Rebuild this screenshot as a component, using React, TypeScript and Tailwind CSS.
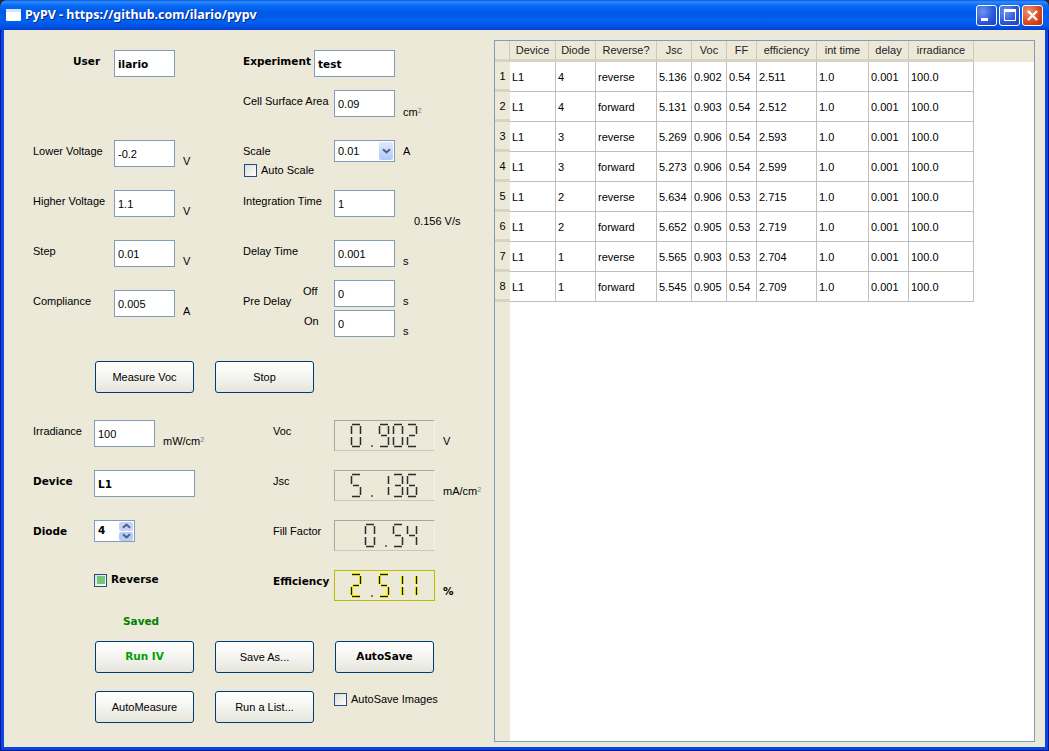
import type { ReactNode } from "react";

const SEGMENTS: Record<string, string> = {
  "0": "abcdef",
  "1": "bc",
  "2": "abged",
  "3": "abgcd",
  "4": "fgbc",
  "5": "afgcd",
  "6": "afgedc",
  "9": "abcdfg",
};

// x, y, length of each segment's dark core; horizontal ones are a, d, g
const SEGMENT_RECTS: Record<string, [number, number, number]> = {
  a: [2, 1, 8],
  b: [10, 3, 8],
  c: [10, 14, 8],
  d: [2, 23, 8],
  e: [1, 14, 8],
  f: [1, 3, 8],
  g: [3, 12, 6],
};

const rows = [
  ["1", "L1", "4", "reverse", "5.136", "0.902", "0.54", "2.511"],
  ["2", "L1", "4", "forward", "5.131", "0.903", "0.54", "2.512"],
  ["3", "L1", "3", "reverse", "5.269", "0.906", "0.54", "2.593"],
  ["4", "L1", "3", "forward", "5.273", "0.906", "0.54", "2.599"],
  ["5", "L1", "2", "reverse", "5.634", "0.906", "0.53", "2.715"],
  ["6", "L1", "2", "forward", "5.652", "0.905", "0.53", "2.719"],
  ["7", "L1", "1", "reverse", "5.565", "0.903", "0.53", "2.704"],
  ["8", "L1", "1", "forward", "5.545", "0.905", "0.54", "2.709"],
];

const headers = ["Device", "Diode", "Reverse?", "Jsc", "Voc", "FF", "efficiency", "int time", "delay", "irradiance"];
const gridCols = "grid grid-cols-[15px_46px_40px_61px_35px_35px_30px_60px_52px_40px_65px]";
const boldFont = "font-['DejaVu_Sans',sans-serif] text-[10.5px] font-bold";

const Field = ({ value, width = "w-[61px]", bold }: { value: string; width?: string; bold?: boolean }) => (
  <input
    readOnly
    value={value}
    className={`${width} h-[27px] shrink-0 border border-[#7f9db9] bg-white px-[3px] text-black outline-none ${bold ? boldFont : ""}`}
  />
);

const Label = ({ children, width, bold }: { children: ReactNode; width: string; bold?: boolean }) => (
  <span className={`${width} h-[22px] shrink-0 leading-[22px] whitespace-nowrap ${bold ? boldFont : ""}`}>{children}</span>
);

const Unit = ({ children, bold }: { children: ReactNode; bold?: boolean }) => (
  <span className={`mt-[11px] ml-2 h-5 leading-5 whitespace-nowrap ${bold ? boldFont : ""}`}>{children}</span>
);

const Sq = () => <sup className="text-[7px] leading-none text-[#777]">2</sup>;

const Check = ({ checked }: { checked?: boolean }) => (
  <span className="flex h-[13px] w-[13px] shrink-0 items-center justify-center border border-[#1c5180] bg-linear-to-br from-[#dcdcd7] to-white">
    {checked && <span className="h-2 w-2 bg-[#73c77b]" />}
  </span>
);

const Btn = ({ children, className = "" }: { children: ReactNode; className?: string }) => (
  <button className={`flex h-8 w-[99px] shrink-0 items-center justify-center rounded-[3px] border border-[#003c74] bg-linear-to-b from-white via-[#f4f4f0] to-[#e6e5dc] ${className}`}>
    {children}
  </button>
);

const Lcd = ({ value, active }: { value: string; active?: boolean }) => {
  const chars = value.split("");
  const start = 5 - chars.length;
  const fg = active ? "#d8d800" : "#b9b8ae";
  const dark = active ? "#1a1a00" : "#2c2c2c";
  return (
    <div className={`h-[31px] w-[101px] shrink-0 border ${active ? "border-[#bcbc00]" : "border-[#aaa89c] border-r-[#f4f3ea] border-b-[#c9c7ba]"}`}>
      <svg width="99" height="29" viewBox="0 0 99 29" aria-label={value} shapeRendering="crispEdges">
        {chars.map((c, i) => {
          const x = 15 + (start + i) * 14;
          if (c === ".") return <rect key={i} x={x + 7} y={24} width={2} height={2} fill={active ? "#8a8a00" : "#77766c"} />;
          return (
            <g key={i} transform={`translate(${x} 2)`}>
              {SEGMENTS[c].split("").map((s) => {
                const [sx, sy, len] = SEGMENT_RECTS[s];
                const horizontal = s === "a" || s === "d" || s === "g";
                return horizontal ? (
                  <g key={s}>
                    <rect x={sx} y={sy - 1} width={len} height={3} fill={fg} />
                    <rect x={sx} y={sy} width={len} height={1} fill={dark} />
                  </g>
                ) : (
                  <g key={s}>
                    <rect x={sx - 1} y={sy} width={3} height={len} fill={fg} />
                    <rect x={sx} y={sy} width={1} height={len} fill={dark} />
                  </g>
                );
              })}
            </g>
          );
        })}
      </svg>
    </div>
  );
};

const Arrow = ({ up }: { up?: boolean }) => (
  <svg width="9" height="6" viewBox="0 0 9 6" className={up ? "rotate-180" : ""}>
    <path d="M1 1.2 4.5 4.5 8 1.2" fill="none" stroke="#4d6185" strokeWidth="2" />
  </svg>
);

const WinBtn = ({ close, children }: { close?: boolean; children: ReactNode }) => (
  <span
    className={`flex h-[21px] w-[21px] items-center justify-center rounded-[3px] border border-white ${
      close
        ? "bg-[radial-gradient(circle_at_30%_30%,#ef9272,#d9461f_60%,#b5300f)]"
        : "bg-[radial-gradient(circle_at_30%_30%,#6f94f0,#2a56d8_60%,#1c3fc0)]"
    }`}
  >
    {children}
  </span>
);

export default function App() {
  return (
    <div className="flex h-[751px] w-[1049px] flex-col overflow-hidden bg-[#2a2a2a] font-['Liberation_Sans',sans-serif] text-[11px] text-black">
      <div className="flex h-[30px] shrink-0 items-center rounded-t-[7px] bg-[linear-gradient(to_bottom,#0a5ae0_0,#2f8cff_2px,#0a6cf5_5px,#0058e8_12px,#0160f0_22px,#0250e0_27px,#0240cc_30px)] pr-[6px] pl-[6px]">
        <span className="flex h-3 w-[15px] flex-col rounded-[1px] bg-white">
          <span className="h-[3px] w-full bg-[#d8e6fb]" />
        </span>
        <span className="ml-1 font-['Noto_Sans',sans-serif] text-[12.5px] font-bold whitespace-nowrap text-white [text-shadow:1px_1px_0_#0a2a90]">
          PyPV - https://github.com/ilario/pypv
        </span>
        <span className="ml-auto flex gap-[2px]">
          <WinBtn>
            <span className="mt-[9px] mr-[5px] h-[3px] w-[7px] bg-white" />
          </WinBtn>
          <WinBtn>
            <span className="h-[12px] w-[12px] border border-t-[3px] border-white" />
          </WinBtn>
          <WinBtn close>
            <svg width="13" height="13" viewBox="0 0 13 13">
              <path d="M2 2 11 11M11 2 2 11" stroke="white" strokeWidth="2.4" />
            </svg>
          </WinBtn>
        </span>
      </div>

      <div className="flex min-h-0 flex-1 border-x border-b border-[#00188f]">
        <div className="flex min-h-0 flex-1 border-x-[3px] border-b-[3px] border-[#0a45e6] bg-[#ece9d8]">
          <div className="w-[490px] shrink-0">
            <div className="ml-[29px] flex pt-5">
              <div className="flex w-[210px] shrink-0 flex-col">
                <div className="flex h-[27px]">
                  <Label width="w-[81px] pl-10" bold>User</Label>
                  <Field value="ilario" bold />
                </div>
                <div className="mt-[63px] flex h-[27px]">
                  <Label width="w-[81px]">Lower Voltage</Label>
                  <Field value="-0.2" />
                  <Unit>V</Unit>
                </div>
                <div className="mt-[23px] flex h-[27px]">
                  <Label width="w-[81px]">Higher Voltage</Label>
                  <Field value="1.1" />
                  <Unit>V</Unit>
                </div>
                <div className="mt-[23px] flex h-[27px]">
                  <Label width="w-[81px]">Step</Label>
                  <Field value="0.01" />
                  <Unit>V</Unit>
                </div>
                <div className="mt-[23px] flex h-[27px]">
                  <Label width="w-[81px]">Compliance</Label>
                  <Field value="0.005" />
                  <Unit>A</Unit>
                </div>
              </div>

              <div className="flex flex-col">
                <div className="flex h-[27px]">
                  <Label width="w-[71px]" bold>Experiment</Label>
                  <Field value="test" width="w-[81px]" bold />
                </div>
                <div className="mt-[13px] flex h-[27px]">
                  <Label width="w-[91px]">Cell Surface Area</Label>
                  <Field value="0.09" />
                  <span className="mt-3 ml-2 h-5 leading-5">cm<Sq /></span>
                </div>
                <div className="mt-[23px] flex h-[22px]">
                  <Label width="w-[91px]">Scale</Label>
                  <div className="flex h-[22px] w-[61px] items-center justify-between border border-[#7f9db9] bg-white pr-px pl-[3px]">
                    0.01
                    <span className="flex h-[18px] w-[14px] items-center justify-center rounded-[2px] bg-linear-to-b from-[#e1eafe] to-[#aec8f7]">
                      <Arrow />
                    </span>
                  </div>
                  <span className="ml-2 h-[22px] leading-[22px]">A</span>
                </div>
                <div className="mt-px flex h-[14px] items-center gap-1 pl-px">
                  <Check />
                  Auto Scale
                </div>
                <div className="mt-[13px] flex h-[27px]">
                  <Label width="w-[91px]">Integration Time</Label>
                  <Field value="1" />
                  <span className="mt-[21px] ml-[19px] h-5 leading-5 whitespace-nowrap">0.156 V/s</span>
                </div>
                <div className="mt-[23px] flex h-[27px]">
                  <Label width="w-[91px]">Delay Time</Label>
                  <Field value="0.001" />
                  <Unit>s</Unit>
                </div>
                <div className="mt-[13px] flex">
                  <span className="mt-[10px] w-[60px] leading-[22px]">Pre Delay</span>
                  <div className="flex flex-col gap-[3px]">
                    <div className="flex h-[27px]">
                      <Label width="w-[31px]">Off</Label>
                      <Field value="0" />
                      <Unit>s</Unit>
                    </div>
                    <div className="flex h-[27px]">
                      <Label width="w-[31px] pl-px">On</Label>
                      <Field value="0" />
                      <Unit>s</Unit>
                    </div>
                  </div>
                </div>
              </div>
            </div>

            <div className="mt-6 ml-[91px] flex gap-[21px]">
              <Btn>Measure Voc</Btn>
              <Btn>Stop</Btn>
            </div>

            <div className="mt-[27px] ml-[29px] flex">
              <div className="flex w-[240px] shrink-0 flex-col">
                <div className="flex h-[50px]">
                  <Label width="w-[61px]">Irradiance</Label>
                  <Field value="100" />
                  <Unit>mW/cm<Sq /></Unit>
                </div>
                <div className="flex h-[50px]">
                  <Label width="w-[61px]" bold>Device</Label>
                  <Field value="L1" width="w-[101px]" bold />
                </div>
                <div className="flex h-[50px]">
                  <Label width="w-[61px]" bold>Diode</Label>
                  <div className={`flex h-[22px] w-[41px] items-center justify-between border border-[#7f9db9] bg-white pr-px pl-[3px] ${boldFont}`}>
                    4
                    <span className="flex w-[14px] flex-col gap-px">
                      <span className="flex h-[9px] items-center justify-center rounded-[2px] bg-[#c3d3f9]"><Arrow up /></span>
                      <span className="flex h-[9px] items-center justify-center rounded-[2px] bg-[#b9ccf8]"><Arrow /></span>
                    </span>
                  </div>
                </div>
                <div className="flex h-[42px] items-start pl-[61px]">
                  <span className={`mt-[3px] flex h-[14px] items-center gap-1 ${boldFont}`}>
                    <Check checked />
                    Reverse
                  </span>
                </div>
                <div className={`h-[18px] pl-[90px] leading-[18px] text-[#008000] ${boldFont}`}>Saved</div>
              </div>

              <div className="flex flex-col">
                <div className="flex h-[50px]">
                  <Label width="w-[61px]">Voc</Label>
                  <Lcd value="0.902" />
                  <Unit>V</Unit>
                </div>
                <div className="flex h-[50px]">
                  <Label width="w-[61px]">Jsc</Label>
                  <Lcd value="5.136" />
                  <Unit>mA/cm<Sq /></Unit>
                </div>
                <div className="flex h-[50px]">
                  <Label width="w-[61px]">Fill Factor</Label>
                  <Lcd value="0.54" />
                </div>
                <div className="flex h-[50px]">
                  <Label width="w-[61px]" bold>Efficiency</Label>
                  <Lcd value="2.511" active />
                  <Unit bold>%</Unit>
                </div>
              </div>
            </div>

            <div className="mt-[11px] ml-[91px] flex gap-[21px]">
              <Btn className={`text-[#00a000] ${boldFont}`}>Run IV</Btn>
              <Btn>Save As...</Btn>
              <Btn className={boldFont}>AutoSave</Btn>
            </div>
            <div className="mt-[18px] ml-[91px] flex gap-[21px]">
              <Btn>AutoMeasure</Btn>
              <Btn>Run a List...</Btn>
              <span className="mt-px -ml-px flex h-[14px] items-center gap-1 whitespace-nowrap">
                <Check />
                AutoSave Images
              </span>
            </div>
          </div>

          <div className="mt-[10px] mb-[5px] flex w-[541px] shrink-0 flex-col border border-[#7f9db9] bg-white">
            <div className={`${gridCols} h-[21px] shrink-0 bg-[#ece9d8]`}>
              <span className="border-r border-b-[3px] border-r-[#cdcabb] border-b-[#d8d4c4]" />
              {headers.map((h) => (
                <span key={h} className="border-r border-b-[3px] border-r-[#cdcabb] border-b-[#d8d4c4] pt-px text-center leading-[17px] text-[#222]">
                  {h}
                </span>
              ))}
            </div>
            {rows.map((r) => (
              <div key={r[0]} className={`${gridCols} h-[30px] shrink-0`}>
                <span className="border-b-[3px] border-[#d8d4c4] bg-[#ece9d8] pt-px text-center leading-[26px]">{r[0]}</span>
                {[...r.slice(1), "1.0", "0.001", "100.0"].map((c, i) => (
                  <span key={i} className="border-r border-b border-[#c0c0c0] pt-px pl-[2px] leading-[28px] whitespace-nowrap">
                    {c}
                  </span>
                ))}
              </div>
            ))}
            <div className="w-[15px] flex-1 bg-[#ece9d8]" />
          </div>
        </div>
      </div>
    </div>
  );
}
